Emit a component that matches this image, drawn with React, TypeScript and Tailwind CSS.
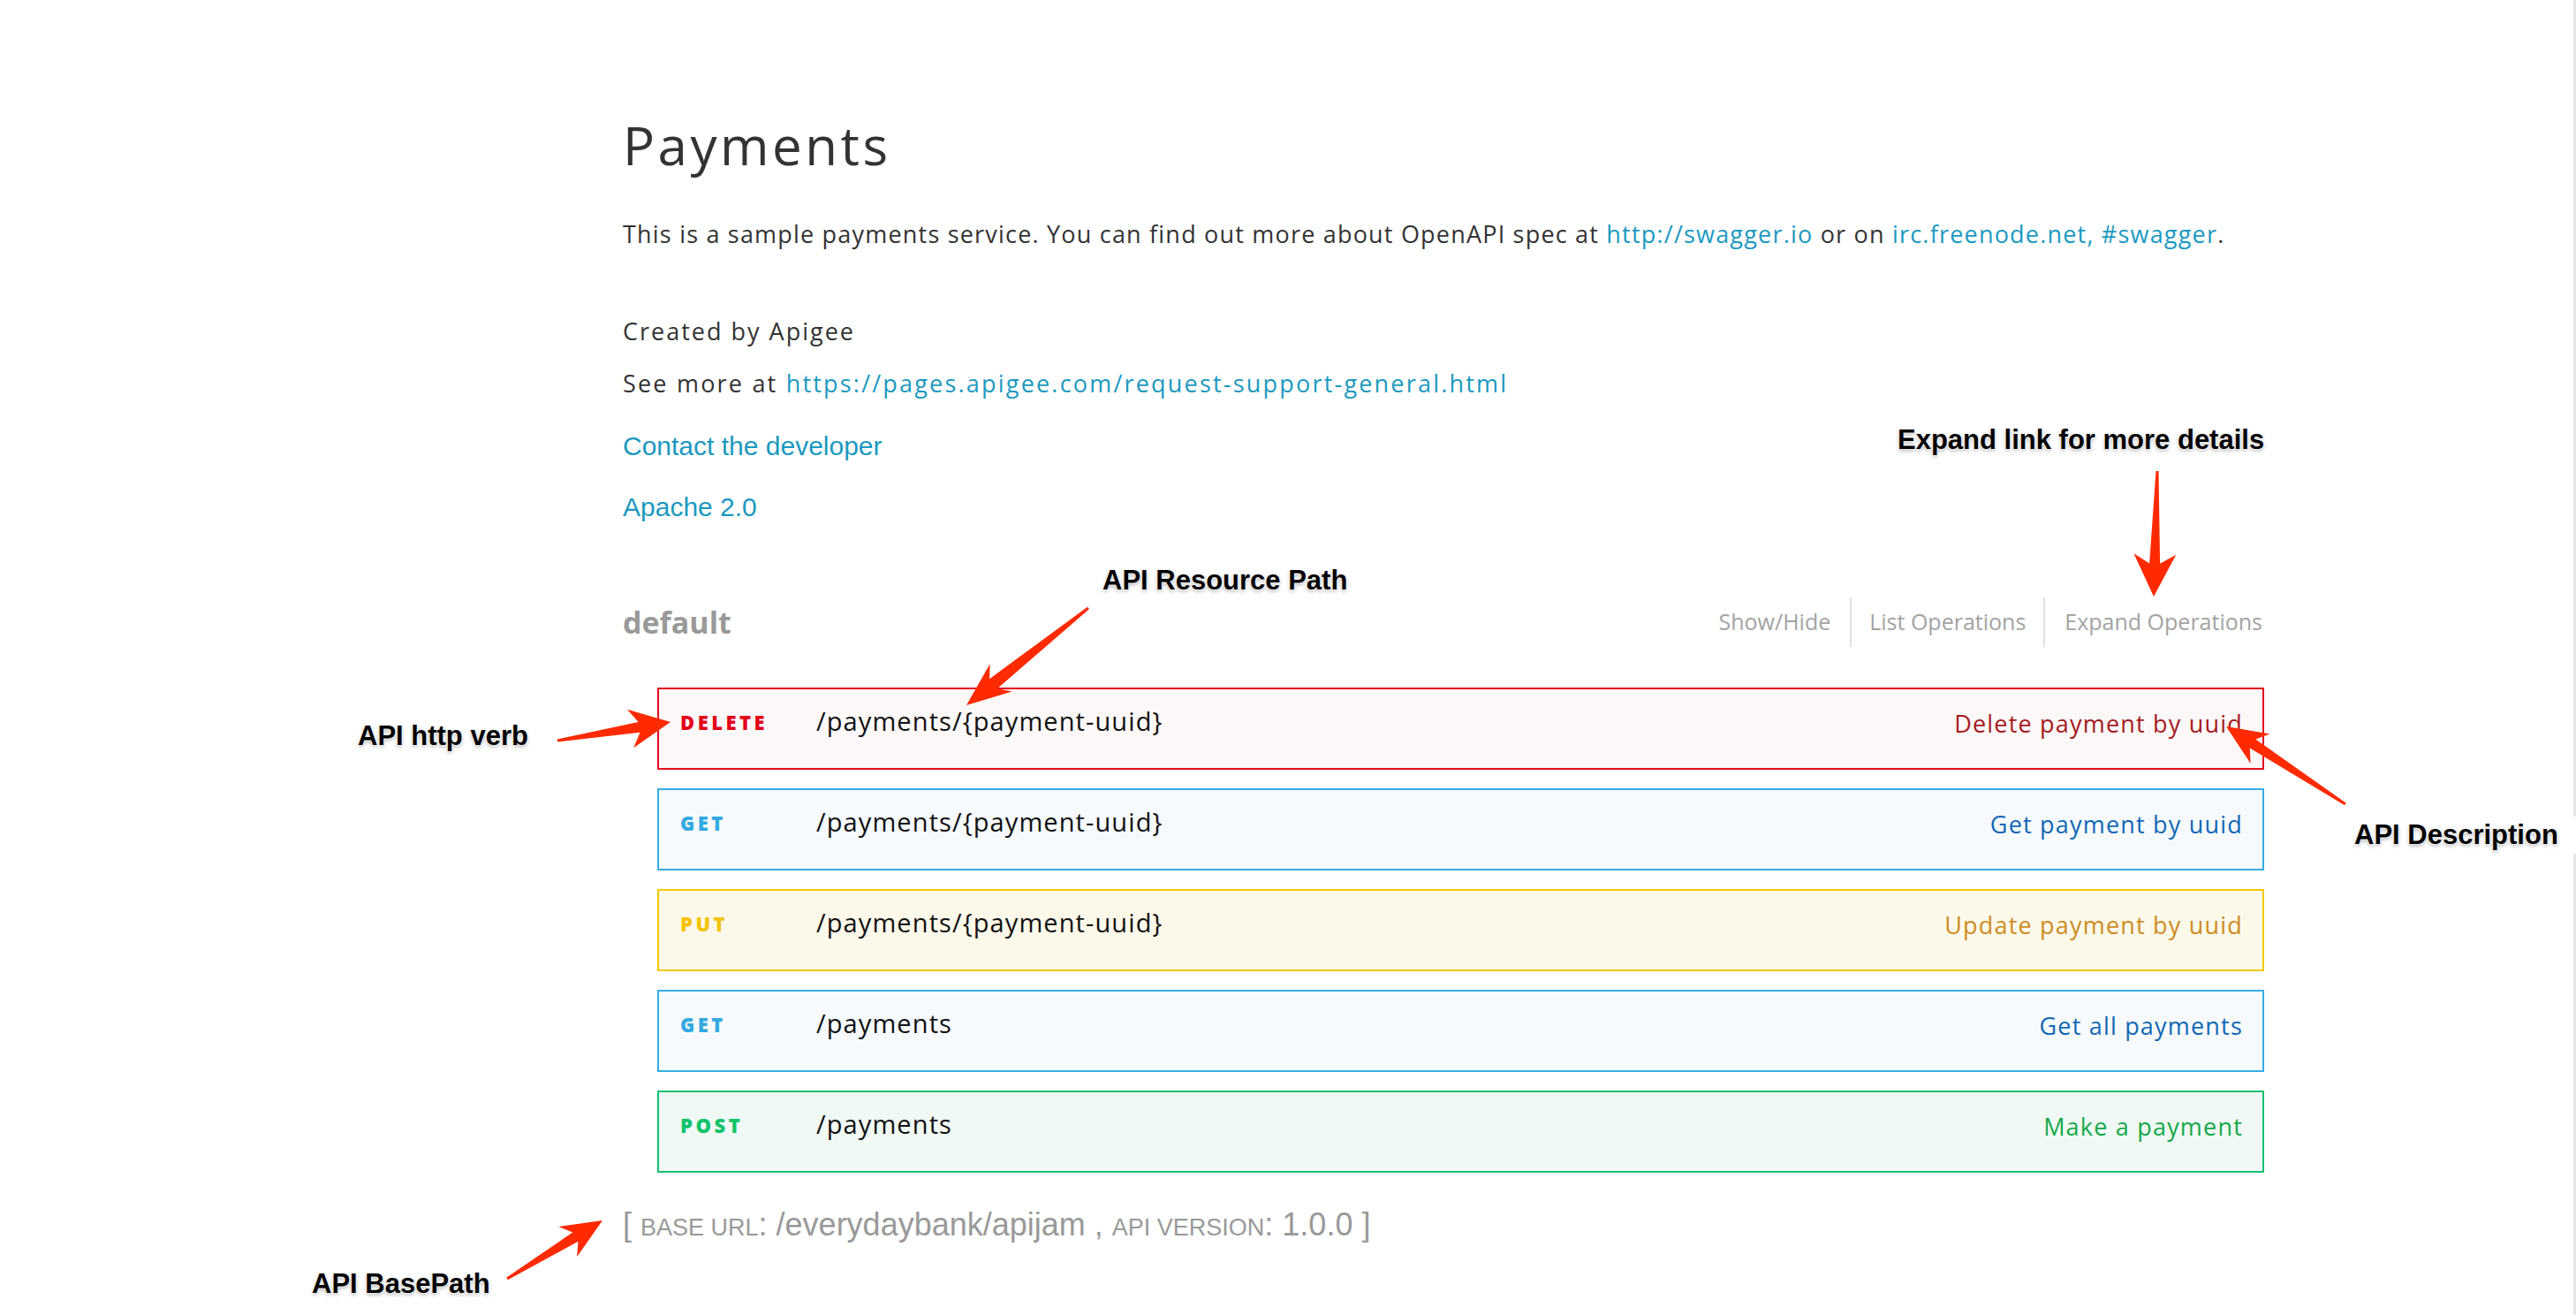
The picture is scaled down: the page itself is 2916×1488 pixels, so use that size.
import React from "react";

type Op = {
	verb: string;
	path: string;
	summary: string;
	box: string;
	verbColor: string;
	summaryColor: string;
};

const operations: Op[] = [
	{
		verb: "DELETE",
		path: "/payments/{payment-uuid}",
		summary: "Delete payment by uuid",
		box: "border-[#e30b20] bg-[#fcf8f8]",
		verbColor: "text-[#e2001a]",
		summaryColor: "text-[#a51a20]",
	},
	{
		verb: "GET",
		path: "/payments/{payment-uuid}",
		summary: "Get payment by uuid",
		box: "border-[#35ade4] bg-[#f6fafd]",
		verbColor: "text-[#32a8e0]",
		summaryColor: "text-[#1168b4]",
	},
	{
		verb: "PUT",
		path: "/payments/{payment-uuid}",
		summary: "Update payment by uuid",
		box: "border-[#f5c800] bg-[#fdf9ea]",
		verbColor: "text-[#f3c200]",
		summaryColor: "text-[#cc8c24]",
	},
	{
		verb: "GET",
		path: "/payments",
		summary: "Get all payments",
		box: "border-[#35ade4] bg-[#f6fafd]",
		verbColor: "text-[#32a8e0]",
		summaryColor: "text-[#1168b4]",
	},
	{
		verb: "POST",
		path: "/payments",
		summary: "Make a payment",
		box: "border-[#12c172] bg-[#f1f9f4]",
		verbColor: "text-[#10c46b]",
		summaryColor: "text-[#14a84a]",
	},
];

// skitch style arrow: thin tail, widening shaft, barbed head
const arrow = (x1: number, y1: number, x2: number, y2: number, head = 46, wing = 20, neck = 7) => {
	const len = Math.hypot(x2 - x1, y2 - y1);
	const dx = (x2 - x1) / len;
	const dy = (y2 - y1) / len;
	const nx = -dy;
	const ny = dx;
	const bx = x2 - dx * head * 0.78;
	const by = y2 - dy * head * 0.78;
	const wx = x2 - dx * head;
	const wy = y2 - dy * head;
	const pts = [
		[x1 + nx * 1.5, y1 + ny * 1.5],
		[bx + nx * neck, by + ny * neck],
		[wx + nx * wing, wy + ny * wing],
		[x2, y2],
		[wx - nx * wing, wy - ny * wing],
		[bx - nx * neck, by - ny * neck],
		[x1 - nx * 1.5, y1 - ny * 1.5],
	];
	return pts.map((p) => p.map((v) => v.toFixed(1)).join(",")).join(" ");
};

const labelCls =
	"absolute font-['Liberation_Sans',Arial,sans-serif] font-bold text-[31px] leading-[34px] text-black whitespace-nowrap [text-shadow:0_0_2px_#fff,0_0_3px_#fff,0_2px_4px_rgba(0,0,0,0.35)]";

const OperationRow: React.FC<{ op: Op }> = ({ op }) => (
	<div className={`flex h-[93px] items-start border-2 pt-[18px] pl-[24px] pr-[22px] ${op.box}`}>
		<span
			className={`w-[154px] shrink-0 pt-[1px] text-[22px] leading-[36px] font-extrabold tracking-[3.5px] ${op.verbColor}`}
		>
			{op.verb}
		</span>
		<span className="flex-1 text-[29px] leading-[36px] tracking-[1.1px] text-[#111]">{op.path}</span>
		<span className={`pt-[3px] text-[27px] leading-[36px] tracking-[1.2px] ${op.summaryColor}`}>
			{op.summary}
		</span>
	</div>
);

export default function App() {
	return (
		<div className="relative flex min-h-[1488px] w-full bg-white font-['Open_Sans',sans-serif]">
			<main className="flex-1 pt-[124px] pl-[705px]">
				<div className="flex w-[1858px] flex-col">
					<h1 className="text-[60px] leading-[80px] font-normal tracking-[3.5px] text-[#333]">Payments</h1>
					<p className="mt-[43px] text-[27px] leading-[36px] tracking-[1.2px] text-[#333]">
						This is a sample payments service. You can find out more about OpenAPI spec at{" "}
						<a className="text-[#1b99c0]">http://swagger.io</a> or on{" "}
						<a className="text-[#1b99c0]">irc.freenode.net, #swagger</a>.
					</p>
					<p className="mt-[74px] text-[27px] leading-[36px] tracking-[2px] text-[#333]">Created by Apigee</p>
					<p className="mt-[23px] text-[27px] leading-[36px] tracking-[2.2px] text-[#333]">
						See more at{" "}
						<a className="text-[#1b99c0]">https://pages.apigee.com/request-support-general.html</a>
					</p>
					<a className="mt-[35px] font-['Liberation_Sans',Arial,sans-serif] text-[30px] leading-[36px] text-[#1b99c0]">
						Contact the developer
					</a>
					<a className="mt-[33px] font-['Liberation_Sans',Arial,sans-serif] text-[30px] leading-[36px] text-[#1b99c0]">
						Apache 2.0
					</a>

					<div className="mt-[84px] flex h-[56px] items-center justify-between">
						<h2 className="text-[34px] font-bold text-[#999]">default</h2>
						<ul className="flex h-full items-stretch text-[25px] text-[#a3a3a3]">
							<li className="flex items-center pr-[22px]">Show/Hide</li>
							<li className="flex items-center border-l-2 border-[#e2e2e2] px-[20px]">List Operations</li>
							<li className="flex items-center border-l-2 border-[#e2e2e2] pl-[22px] pr-[2px]">
								Expand Operations
							</li>
						</ul>
					</div>

					<div className="mt-[46px] ml-[39px] flex flex-col gap-[21px]">
						{operations.map((op, i) => (
							<OperationRow key={i} op={op} />
						))}
					</div>

					<div className="mt-[39px] flex h-[40px] items-center font-['Liberation_Sans',Arial,sans-serif] text-[36px] text-[#999]">
						<span>
							[ <span className="text-[27px] uppercase">Base URL</span>: /everydaybank/apijam ,{" "}
							<span className="text-[27px] uppercase">Api Version</span>: 1.0.0 ]
						</span>
					</div>
				</div>
			</main>
			<div className="w-[3px] shrink-0 bg-[#e6e6e6]" />

			{/* annotations */}
			<svg className="pointer-events-none absolute top-0 left-0" width="2916" height="1488">
				<g fill="#ff2a00">
					<polygon points={arrow(1232, 688, 1094, 798, 50, 20, 7)} />
					<polygon points={arrow(631, 838, 759, 817, 46, 22, 6)} />
					<polygon points={arrow(2442, 533, 2438, 675, 48, 24, 6)} />
					<polygon points={arrow(2655, 910, 2520, 822, 46, 20, 6)} />
					<polygon points={arrow(574, 1447, 682, 1381, 46, 20, 6)} />
				</g>
			</svg>
			<span className={`${labelCls} top-[481px] left-[2148px]`}>Expand link for more details</span>
			<span className={`${labelCls} top-[640px] left-[1248px]`}>API Resource Path</span>
			<span className={`${labelCls} top-[816px] left-[405px]`}>API http verb</span>
			<span className={`${labelCls} top-[924px] left-[2660px] bg-white py-[4px] pr-[24px] pl-[5px]`}>
				API Description
			</span>
			<span className={`${labelCls} top-[1436px] left-[353px]`}>API BasePath</span>
		</div>
	);
}
